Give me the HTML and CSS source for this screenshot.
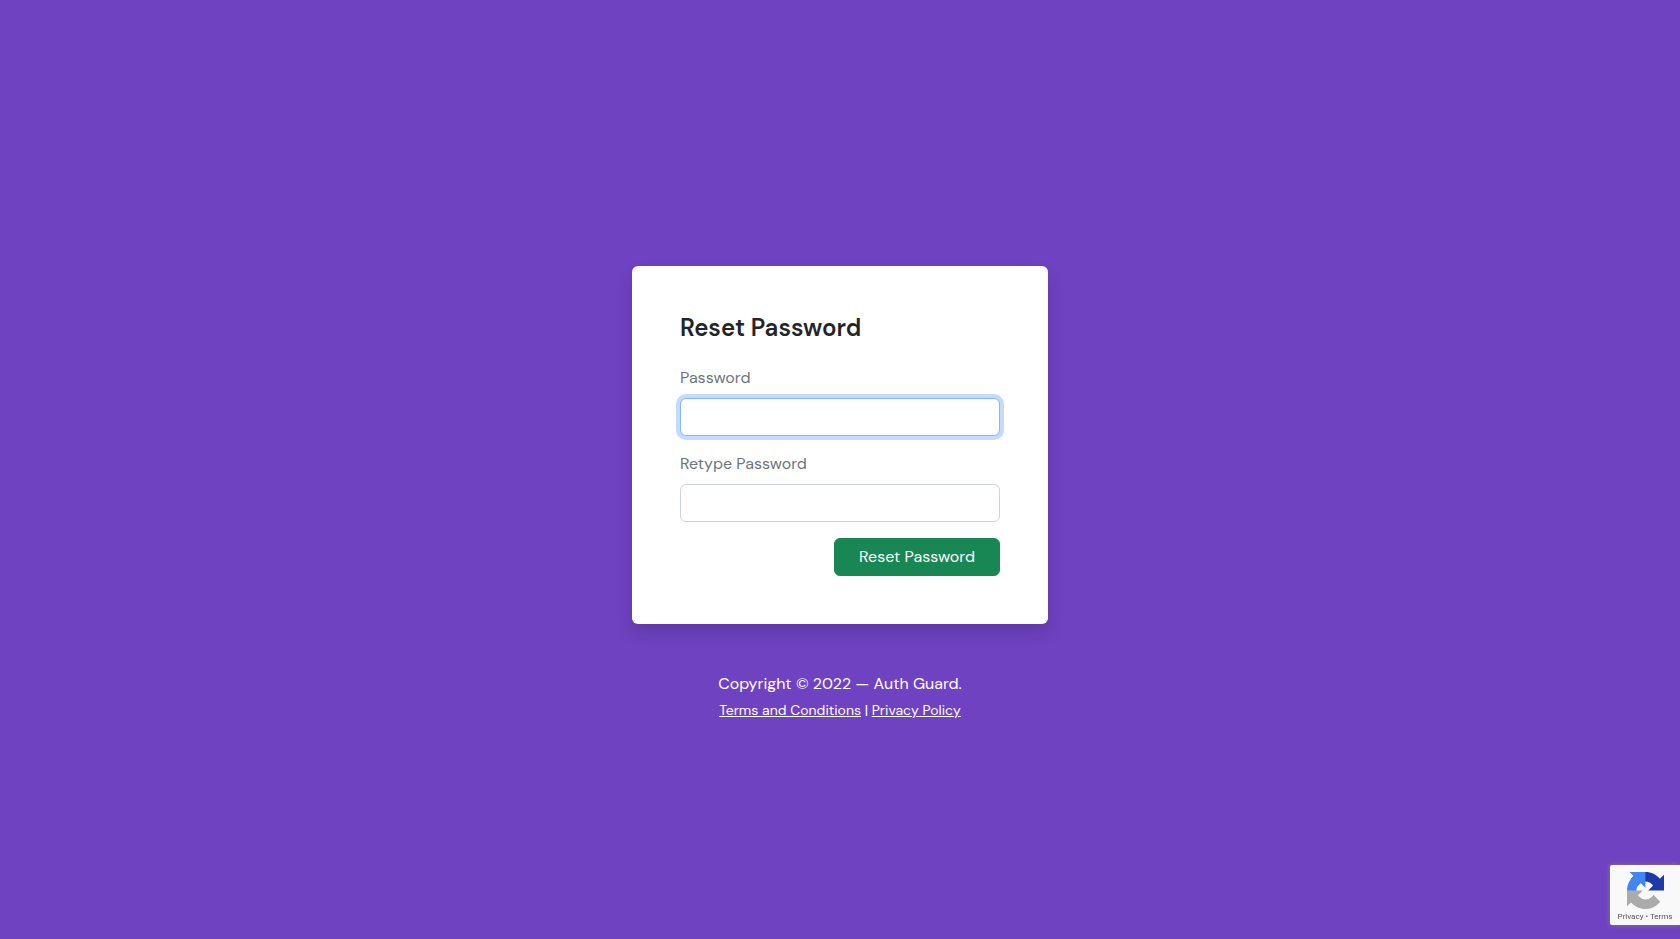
FILE: index.html
```html
<!DOCTYPE html>
<html lang="en">
<head>
    <meta charset="utf-8">
    <title>Reset Password</title>
    <meta name="viewport" content="width=device-width, initial-scale=1">
    <link rel="stylesheet" href="styles.css">
</head>
<body>
    <main class="page">
        <div class="card">
            <h1>Reset Password</h1>
            <form method="post">
                <div class="field">
                    <label for="password">Password</label>
                    <input type="password" id="password" name="password" required autofocus>
                </div>
                <div class="field">
                    <label for="password-confirm">Retype Password</label>
                    <input type="password" id="password-confirm" name="password_confirm" required>
                </div>
                <div class="actions">
                    <button type="submit">Reset Password</button>
                </div>
            </form>
        </div>

        <footer>
            <div>Copyright &copy; 2022 &mdash; Auth Guard.</div>
            <div class="links"><a href="#">Terms and Conditions</a> | <a href="#">Privacy Policy</a></div>
        </footer>
    </main>

    <!-- reCAPTCHA badge -->
    <div class="badge">
        <svg viewBox="0 0 64 64" aria-hidden="true">
            <path fill="#1c3aa9" d="M64 31.955l-.033-1.37V4.687l-7.16 7.16C50.948 4.674 42.033.093 32.05.093c-10.4 0-19.622 4.96-25.458 12.64l11.736 11.86a15.55 15.55 0 0 1 4.754-5.334c2.05-1.6 4.952-2.906 8.968-2.906.485 0 .86.057 1.135.163 4.976.393 9.288 3.14 11.828 7.124l-8.307 8.307L64 31.953"/>
            <path fill="#4285f4" d="M31.862.094l-1.37.033H4.594l7.16 7.16C4.58 13.147 0 22.06 0 32.046c0 10.4 4.96 19.622 12.64 25.458L24.5 45.768a15.55 15.55 0 0 1-5.334-4.754c-1.6-2.05-2.906-4.952-2.906-8.968 0-.485.057-.86.163-1.135.393-4.976 3.14-9.288 7.124-11.828l8.307 8.307L31.86.095"/>
            <path fill="#ababab" d="M.001 32.045l.033 1.37v25.898l7.16-7.16c5.86 7.173 14.774 11.754 24.76 11.754 10.4 0 19.622-4.96 25.458-12.64l-11.736-11.86a15.55 15.55 0 0 1-4.754 5.334c-2.05 1.6-4.952 2.906-8.968 2.906-.485 0-.86-.057-1.135-.163-4.976-.393-9.288-3.14-11.828-7.124l8.307-8.307c-10.522.04-22.4.066-27.295-.005"/>
        </svg>
        <div class="badge-links"><a href="#">Privacy</a> • <a href="#">Terms</a></div>
    </div>
</body>
</html>
```

FILE: styles.css
```css
* { margin: 0; padding: 0; box-sizing: border-box; }
body { font: 16px/24px "DM Sans", Inter, sans-serif; background: #6f42c1; color: #212529; }
.page { min-height: 100vh; padding: 48px 12px 0; display: flex; flex-direction: column; align-items: center; justify-content: center; }
.card { width: 100%; max-width: 416px; padding: 48px; background: #fff; border-radius: 6px; box-shadow: 0 8px 16px rgba(0, 0, 0, .15); }
h1 { font-size: 24px; font-weight: 600; line-height: 28px; margin-bottom: 24px; }
.field { margin-bottom: 16px; }
label { display: block; margin-bottom: 8px; color: #6c757d; }
input { display: block; width: 100%; height: 38px; padding: 6px 12px; font: inherit; color: #212529; background: #fff; border: 1px solid #ced4da; border-radius: 6px; }
input:focus { outline: 0; border-color: #86b7fe; box-shadow: 0 0 0 4px rgba(13, 110, 253, .25); }
.actions { display: flex; justify-content: flex-end; }
button { height: 38px; padding: 0 24px; font: inherit; color: #fff; background: #198754; border: 1px solid #198754; border-radius: 6px; cursor: pointer; }
footer { margin-top: 48px; text-align: center; color: #fff; }
footer a { color: #fff; }
.links { margin-top: 2px; font-size: 14px; }
.badge { position: fixed; right: 0; bottom: 14px; width: 70px; height: 60px; padding-top: 7px; background: #f9f9f9; border-radius: 2px 0 0 2px; box-shadow: 0 0 5px gray; text-align: center; }
.badge svg { display: block; width: 37px; height: 37px; margin: 0 auto; }
.badge-links { font: 8px/16px Roboto, sans-serif; color: #555; }
.badge-links a { color: #555; text-decoration: none; }
```
